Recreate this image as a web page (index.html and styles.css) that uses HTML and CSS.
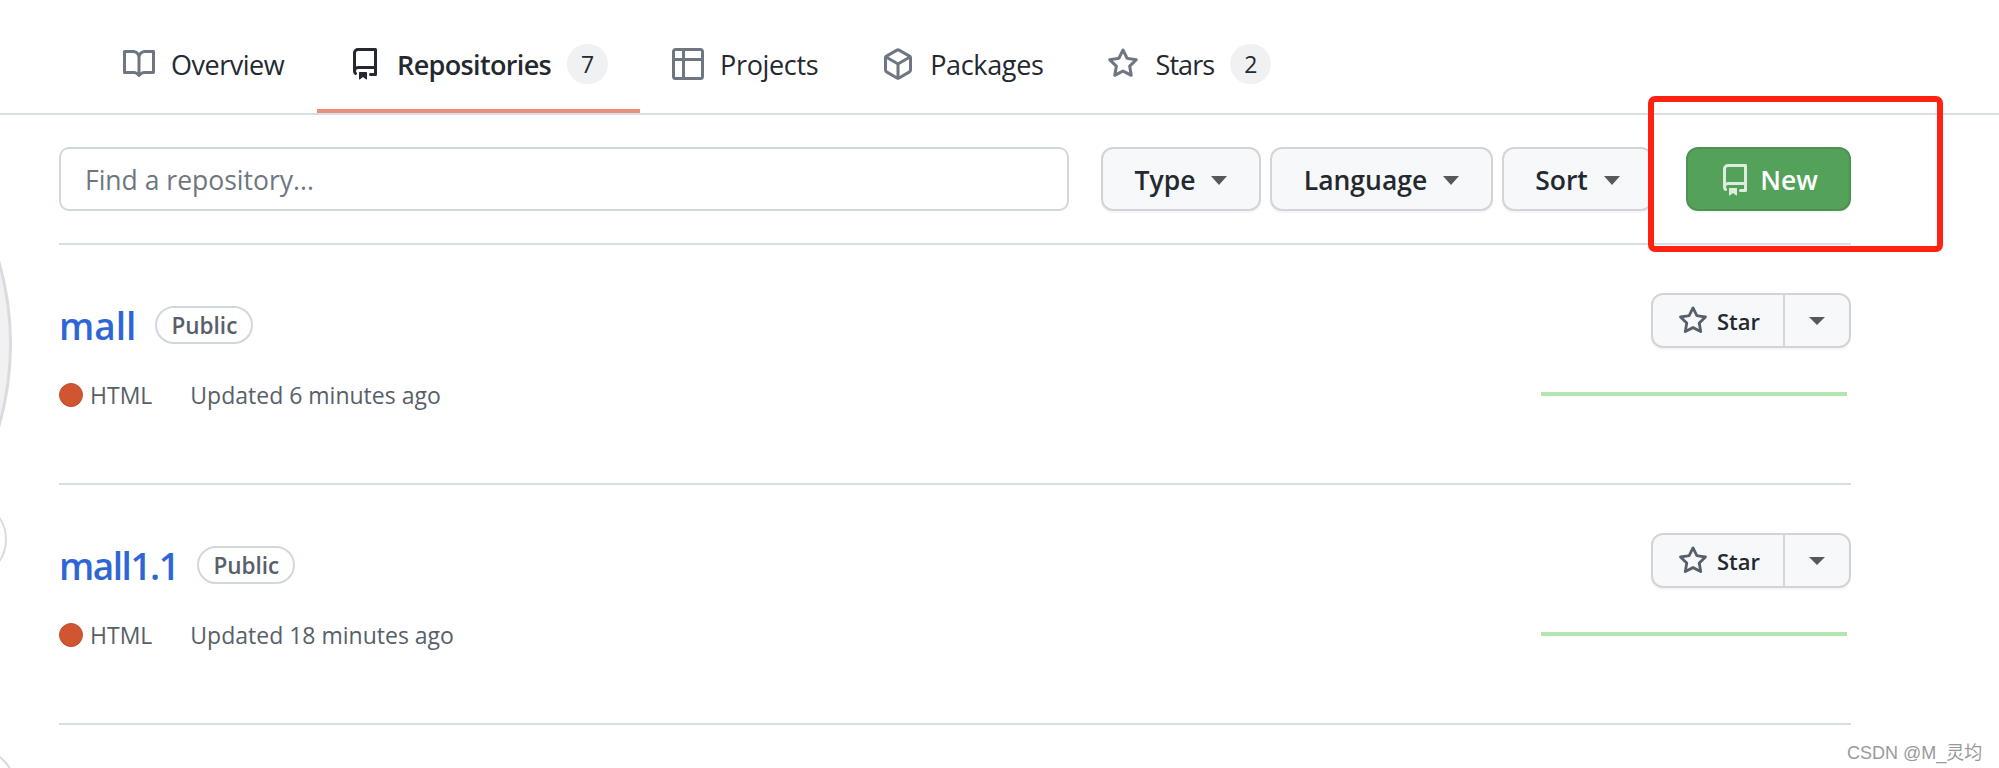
FILE: index.html
```html
<!DOCTYPE html>
<html lang="en">
<head>
<meta charset="utf-8">
<title>Repositories</title>
<link rel="stylesheet" href="styles.css">
</head>
<body>
<svg class="sprite" xmlns="http://www.w3.org/2000/svg">
  <symbol id="i-book" viewBox="0 0 16 16"><path d="M0 1.75A.75.75 0 0 1 .75 1h4.253c1.227 0 2.317.59 3 1.501A3.743 3.743 0 0 1 11.006 1h4.245a.75.75 0 0 1 .75.75v10.5a.75.75 0 0 1-.75.75h-4.507a2.25 2.25 0 0 0-1.591.659l-.622.621a.75.75 0 0 1-1.06 0l-.622-.621A2.25 2.25 0 0 0 5.258 13H.75a.75.75 0 0 1-.75-.75Zm7.251 10.324.004-5.073-.002-2.253A2.25 2.25 0 0 0 5.003 2.5H1.5v9h3.757a3.75 3.75 0 0 1 1.994.574ZM8.755 4.75l-.004 7.322a3.752 3.752 0 0 1 1.992-.572H14.5v-9h-3.495a2.25 2.25 0 0 0-2.25 2.25Z"/></symbol>
  <symbol id="i-repo" viewBox="0 0 16 16"><path d="M2 2.5A2.5 2.5 0 0 1 4.5 0h8.75a.75.75 0 0 1 .75.75v12.5a.75.75 0 0 1-.75.75h-2.5a.75.75 0 0 1 0-1.5h1.75v-2h-8a1 1 0 0 0-.714 1.7.75.75 0 1 1-1.072 1.05A2.495 2.495 0 0 1 2 11.5Zm10.5-1h-8a1 1 0 0 0-1 1v6.708A2.486 2.486 0 0 1 4.5 9h8ZM5 12.25a.25.25 0 0 1 .25-.25h3.5a.25.25 0 0 1 .25.25v3.25a.25.25 0 0 1-.4.2l-1.45-1.087a.249.249 0 0 0-.3 0L5.4 15.7a.25.25 0 0 1-.4-.2Z"/></symbol>
  <symbol id="i-table" viewBox="0 0 16 16"><path d="M0 1.75C0 .784.784 0 1.75 0h12.5C15.216 0 16 .784 16 1.75v12.5A1.75 1.75 0 0 1 14.25 16H1.75A1.75 1.75 0 0 1 0 14.25ZM6.5 6.5v8h7.75a.25.25 0 0 0 .25-.25V6.5Zm8-1.5V1.75a.25.25 0 0 0-.25-.25H6.5V5Zm-9.5 0V1.5H1.75a.25.25 0 0 0-.25.25V5Zm-3.5 1.5v7.75c0 .138.112.25.25.25H5v-8Z"/></symbol>
  <symbol id="i-package" viewBox="0 0 16 16"><path d="m8.878.392 5.25 3.045c.54.314.872.89.872 1.514v6.098a1.75 1.75 0 0 1-.872 1.514l-5.25 3.045a1.75 1.75 0 0 1-1.756 0l-5.25-3.045A1.75 1.75 0 0 1 1 11.049V4.951c0-.624.332-1.201.872-1.514L7.122.392a1.75 1.75 0 0 1 1.756 0ZM7.875 1.69l-4.63 2.685L8 7.133l4.755-2.758-4.63-2.685a.248.248 0 0 0-.25 0ZM2.5 5.677v5.372c0 .09.047.171.125.216l4.625 2.683V8.432Zm6.25 8.271 4.625-2.683a.25.25 0 0 0 .125-.216V5.677L8.75 8.432Z"/></symbol>
  <symbol id="i-star" viewBox="0 0 16 16"><path d="M8 .25a.75.75 0 0 1 .673.418l1.882 3.815 4.21.612a.75.75 0 0 1 .416 1.279l-3.046 2.97.719 4.192a.751.751 0 0 1-1.088.791L8 12.347l-3.766 1.98a.75.75 0 0 1-1.088-.79l.72-4.194L.818 6.374a.75.75 0 0 1 .416-1.28l4.21-.611L7.327.668A.75.75 0 0 1 8 .25Zm0 2.445L6.615 5.5a.75.75 0 0 1-.564.41l-3.097.45 2.24 2.184a.75.75 0 0 1 .216.664l-.528 3.084 2.769-1.456a.75.75 0 0 1 .698 0l2.77 1.456-.53-3.084a.75.75 0 0 1 .216-.664l2.24-2.183-3.096-.45a.75.75 0 0 1-.564-.41L8 2.694Z"/></symbol>
</svg>

<nav class="tabs">
  <a class="tab tab-overview"><svg class="icon"><use href="#i-book"/></svg><span>Overview</span></a>
  <a class="tab tab-active"><svg class="icon"><use href="#i-repo"/></svg><span>Repositories</span><span class="count">7</span></a>
  <a class="tab"><svg class="icon"><use href="#i-table"/></svg><span>Projects</span></a>
  <a class="tab"><svg class="icon"><use href="#i-package"/></svg><span>Packages</span></a>
  <a class="tab tab-stars"><svg class="icon"><use href="#i-star"/></svg><span>Stars</span><span class="count">2</span></a>
</nav>

<main class="content">
  <div class="filters">
    <input class="search" type="text" placeholder="Find a repository...">
    <div class="filter-buttons">
      <button class="btn btn-type">Type<i class="caret"></i></button>
      <button class="btn btn-language">Language<i class="caret"></i></button>
      <button class="btn btn-sort">Sort<i class="caret"></i></button>
    </div>
    <button class="btn btn-new"><svg class="icon icon-new"><use href="#i-repo"/></svg>New</button>
  </div>

  <article class="repo">
    <div class="repo-main">
      <h3 class="repo-title"><a class="repo-name">mall</a><span class="badge">Public</span></h3>
      <p class="repo-meta"><i class="dot"></i><span class="lang">HTML</span><span>Updated 6 minutes ago</span></p>
    </div>
    <div class="repo-side">
      <div class="star-group">
        <button class="star-btn"><svg class="icon icon-star"><use href="#i-star"/></svg>Star</button>
        <button class="star-menu"><i class="caret caret-small"></i></button>
      </div>
      <div class="spark"></div>
    </div>
  </article>

  <article class="repo">
    <div class="repo-main">
      <h3 class="repo-title"><a class="repo-name repo-name-tight">mall1.1</a><span class="badge">Public</span></h3>
      <p class="repo-meta"><i class="dot"></i><span class="lang">HTML</span><span>Updated 18 minutes ago</span></p>
    </div>
    <div class="repo-side">
      <div class="star-group">
        <button class="star-btn"><svg class="icon icon-star"><use href="#i-star"/></svg>Star</button>
        <button class="star-menu"><i class="caret caret-small"></i></button>
      </div>
      <div class="spark"></div>
    </div>
  </article>
</main>

<div class="arcs">
  <div class="arc arc-large"></div>
  <div class="arc arc-small"></div>
  <div class="arc arc-bottom"></div>
</div>
<div class="annotation"></div>
<div class="watermark">CSDN @M_灵均</div>
</body>
</html>
```
FILE: styles.css
```css
* { box-sizing: border-box; }

html, body {
  margin: 0;
  height: 768px;
  overflow: hidden;
  background: #fff;
}

body {
  position: relative;
  font-family: "Open Sans", "Noto Sans", sans-serif;
  color: #24292f;
}

.sprite { display: none; }

.icon {
  width: 32px;
  height: 32px;
  flex: none;
  fill: #6e7781;
}

/* Tabs */
.tabs {
  display: flex;
  height: 115px;
  padding-left: 91px;
  border-bottom: 2px solid #d8dee4;
}

.tab {
  display: flex;
  align-items: center;
  gap: 16px;
  height: 113px;
  padding: 15px 32px 0;
  font-size: 27px;
  letter-spacing: -.35px;
  color: #24292f;
}

.tab-overview {
  padding-right: 33px;
  letter-spacing: -.5px;
}

.tab-active {
  font-weight: 600;
  letter-spacing: -.65px;
  padding-right: 32px;
  box-shadow: inset 0 -4px 0 #ec8e78;
}

.tab-active .icon { fill: #24292f; }

.tab-stars { letter-spacing: -.9px; }

.count {
  display: flex;
  align-items: center;
  justify-content: center;
  width: 41px;
  height: 40px;
  border-radius: 20px;
  background: #eff1f3;
  font-size: 23px;
  font-weight: 500;
  letter-spacing: 0;
}

/* Filters */
.content {
  width: 1851px;
  padding-left: 59px;
}

.filters {
  display: flex;
  align-items: flex-start;
  height: 130px;
  padding-top: 32px;
  border-bottom: 2px solid #d8dee4;
}

.search {
  width: 1010px;
  height: 64px;
  padding: 2px 24px 0;
  border: 2px solid #d0d7de;
  border-radius: 10px;
  outline: none;
  font: 26.5px "Open Sans", "Noto Sans", sans-serif;
  color: #24292f;
}

.search::placeholder { color: #6e7781; opacity: 1; }

.filter-buttons {
  display: flex;
  gap: 9px;
  margin-left: 32px;
}

.btn {
  display: flex;
  align-items: center;
  justify-content: center;
  height: 64px;
  padding: 2px 0 0;
  border: 2px solid #d2d4d8;
  border-radius: 12px;
  background: #f6f8fa;
  box-shadow: 0 2px 0 rgba(27, 31, 36, .04);
  font: 600 26.5px "Open Sans", "Noto Sans", sans-serif;
  color: #24292f;
}

.btn-type { width: 160px; }
.btn-language { width: 223px; }
.btn-sort { width: 151px; }

.caret {
  display: block;
  width: 0;
  height: 0;
  margin-left: 16px;
  border-style: solid;
  border-width: 9px 8px 0;
  border-color: #57585c transparent transparent;
}

.btn-new {
  gap: 9px;
  width: 165px;
  margin-left: 33px;
  background: #54a259;
  border-color: #4e9154;
  color: #fff;
}

.icon-new { fill: #fff; opacity: .8; }

/* Repository rows */
.repo {
  display: flex;
  justify-content: space-between;
  height: 240px;
  padding-top: 48px;
  border-bottom: 2px solid #d8dee4;
}

.repo-title {
  display: flex;
  align-items: center;
  gap: 19px;
  height: 64px;
  margin: 0;
}

.repo-name {
  font-size: 37px;
  font-weight: 600;
  color: #2f66d6;
}

.repo-name-tight { letter-spacing: -1.5px; }

.badge {
  display: flex;
  align-items: center;
  justify-content: center;
  width: 98px;
  height: 38px;
  border: 2px solid #d0d7de;
  border-radius: 19px;
  font-size: 22.5px;
  font-weight: 600;
  letter-spacing: 0;
  color: #57606a;
}

.repo-meta {
  display: flex;
  align-items: center;
  height: 36px;
  margin: 20px 0 0;
  font-size: 23px;
  color: #57606a;
}

.dot {
  width: 24px;
  height: 24px;
  margin-right: 7px;
  border: 1px solid #c24f2d;
  border-radius: 50%;
  background: #d05632;
}

.lang { margin-right: 38px; }

.repo-side {
  display: flex;
  flex-direction: column;
  align-items: flex-end;
}

.star-group {
  display: flex;
  height: 55px;
  border: 2px solid #d2d4d8;
  border-radius: 12px;
  background: #f6f8fa;
  box-shadow: 0 2px 0 rgba(27, 31, 36, .04);
}

.star-btn, .star-menu {
  display: flex;
  align-items: center;
  padding: 0;
  border: 0;
  background: none;
}

.star-btn {
  gap: 9px;
  width: 132px;
  padding-left: 25px;
  border-right: 2px solid #d2d4d8;
  font: 600 22px "Open Sans", "Noto Sans", sans-serif;
  color: #24292f;
}

.star-menu {
  justify-content: center;
  width: 64px;
}

.icon-star { width: 30px; height: 30px; fill: #57606a; }

.caret-small { margin-left: 0; border-width: 8px 8px 0; }

.spark {
  width: 306px;
  height: 4px;
  margin: 44px 4px 0 0;
  background: #b0e6b0;
}

/* Overlays */
.arcs {
  position: absolute;
  inset: 0;
  overflow: hidden;
  pointer-events: none;
}

.arc {
  position: absolute;
  border-radius: 50%;
  border: 3px solid #d8dbdf;
}

.arc-large {
  left: -584px;
  top: 46px;
  width: 596px;
  height: 596px;
  background: #f1f1f2;
}

.arc-small {
  left: -72px;
  top: 500px;
  width: 79px;
  height: 79px;
  background: #fff;
  border-width: 2px;
}

.arc-bottom {
  left: -64px;
  top: 748px;
  width: 80px;
  height: 80px;
  background: #fff;
  border-width: 2px;
}

.annotation {
  position: absolute;
  left: 1648px;
  top: 96px;
  width: 295px;
  height: 156px;
  border: 6px solid #ff2212;
  border-radius: 7px;
}

.watermark {
  position: absolute;
  left: 1847px;
  top: 738px;
  font: 18px "Liberation Sans", "Noto Sans CJK SC", sans-serif;
  color: #9a9a9a;
  white-space: nowrap;
}
```
